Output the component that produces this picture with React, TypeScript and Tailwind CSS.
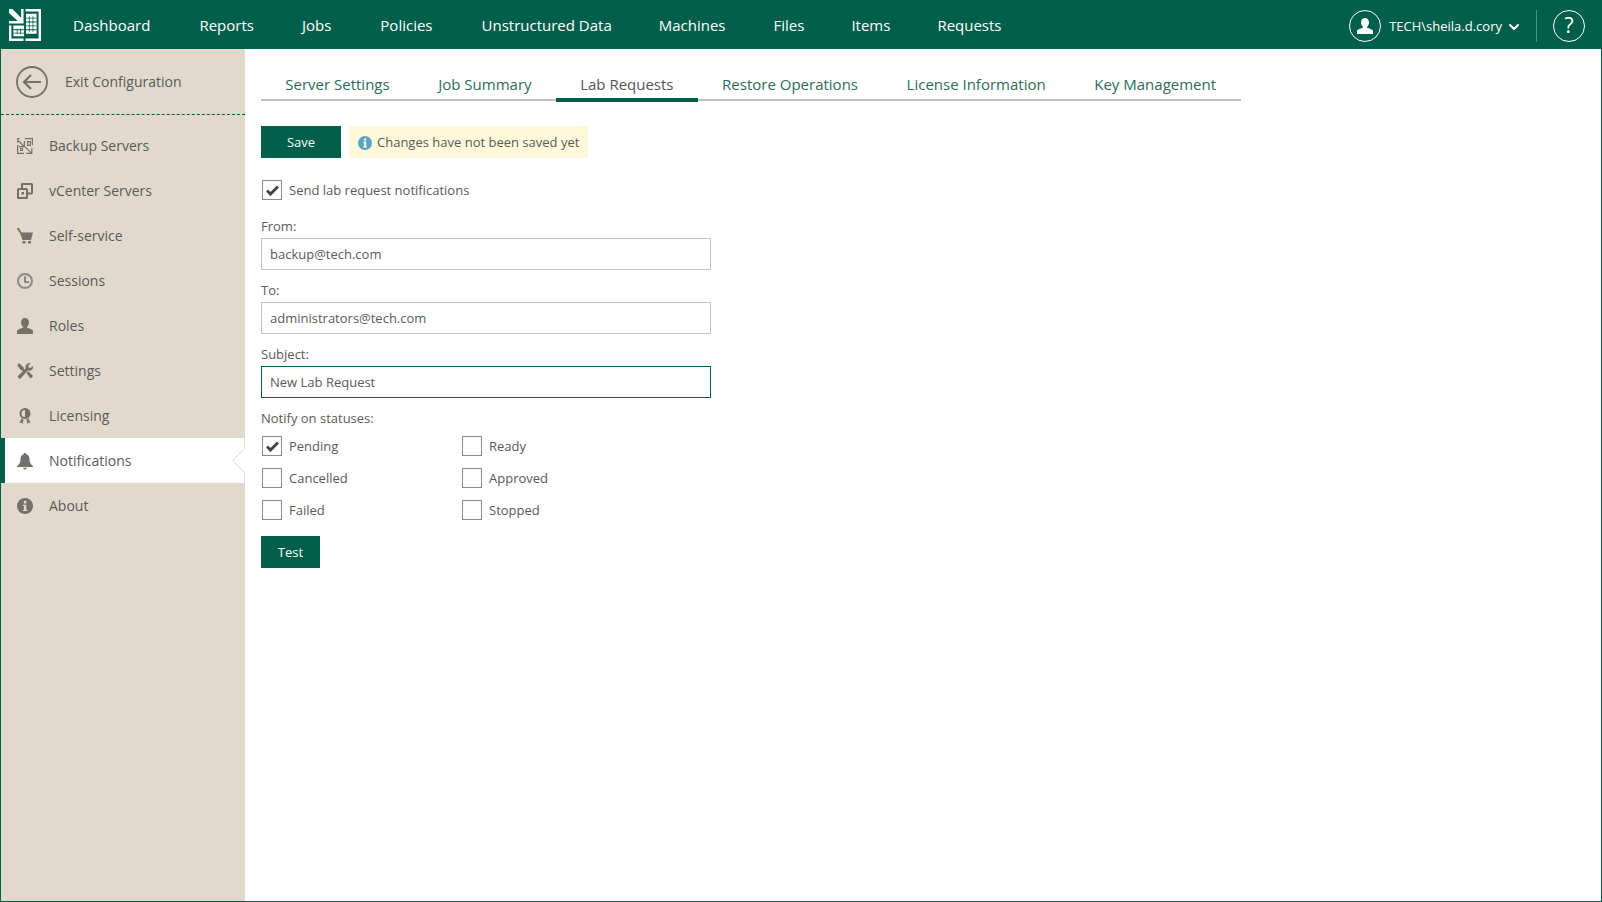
import { ChevronDown } from 'lucide-react';

const navItems = [
  { label: 'Dashboard', className: '' },
  { label: 'Reports', className: 'ml-[49px]' },
  { label: 'Jobs', className: 'ml-[48px]' },
  { label: 'Policies', className: 'ml-[49px]' },
  { label: 'Unstructured Data', className: 'ml-[49px]' },
  { label: 'Machines', className: 'ml-[47px]' },
  { label: 'Files', className: 'ml-[48px]' },
  { label: 'Items', className: 'ml-[47px]' },
  { label: 'Requests', className: 'ml-[47px]' },
];
const tabs = ['Server Settings', 'Job Summary', 'Lab Requests', 'Restore Operations', 'License Information', 'Key Management'];

function Logo() {
  return (
    <svg width="32" height="32" viewBox="0 0 33 33" fill="#fff" className="mt-px shrink-0">
      <path d="M0 0h3.500l9 9V0H15v15H0v-2.500h9L0 4z" />
      <path d="M17 0h16v33H17v-2.500h13.500v-28H17zM0 17h2.500v13.500H15V33H0z" />
      <path d="M17.500 5h11v20.500h-11zM4.500 17h11v11h-11z" />
      <g fill="#005f4b">
        <path d="M20.500 7.500h.8v16h-.8zM24.300 7.500h.8v16h-.8zM17.500 9h11v.8h-11zM17.500 13h11v.8h-11zM17.500 17h11v.8h-11zM17.500 21h11v.8h-11z" />
        <path d="M8 20h.8v6H8zM11.500 20h.8v6h-.8zM4.500 21h11v.8h-11zM4.500 24.500h11v.8h-11z" />
      </g>
    </svg>
  );
}

const icons: Record<string, React.ReactNode> = {
  'Backup Servers': (
    <path fillRule="evenodd" d="M0 0h2.500v1.200H1.200v3.300H0zM8 0h8v7h-1.200V1.200H8zM1 1.500l5.800 5.800V3h1.200v6.300H1.800V8.100h4L.200 2.400zM8.500 8.500l5.700 5.700v-4h1.200V16H9.300v-1.200h4L7.700 9.300zM0 7h1.200v7.800H7V16H0zM10 3h4v5h-4zm1.200 1.200v2.600h1.600V4.200zM3 10h3v3H3zm1 1v1h1v-1z" />
  ),
  'vCenter Servers': (
    <path fillRule="evenodd" d="M5 0h9.500A1.500 1.500 0 0 1 16 1.500V10a1.500 1.500 0 0 1-1.500 1.500H11v3A1.500 1.500 0 0 1 9.500 16h-8A1.500 1.500 0 0 1 0 14.500v-8A1.500 1.500 0 0 1 1.500 5H4V1.500A1 1 0 0 1 5 0zm1 2v3h3.500A1.500 1.500 0 0 1 11 6.500v3h3V2zM2 7v7h7V7zm2.500 2h2.500v2.500H4.500z" />
  ),
  'Self-service': (
    <path d="M0 0h2l2.500 4.500H16L14 12H5.500L3 5 0 1zM5.500 13h3v2.500h-3zM11 13h3v2.500h-3z" />
  ),
  Sessions: (
    <g>
      <circle cx="8" cy="8" r="7" fill="none" stroke="#8a8a86" strokeWidth="2" />
      <path d="M7.200 3.500h1.600v4.800H12v1.500H7.200z" fill="#75706a" />
    </g>
  ),
  Roles: (
    <path d="M8 0c2.400 0 4 1.900 4 4.400 0 1.800-.8 3.400-1.900 4.200v1.200c2.700.9 5.900 1.900 5.900 3.400V16H0v-2.800c0-1.500 3.200-2.500 5.900-3.400V8.600C4.800 7.800 4 6.200 4 4.400 4 1.900 5.600 0 8 0z" />
  ),
  Settings: (
    <path d="M2 0l4.700 4.600.3 1.600 1.700 1.700-1.400 1.400-1.700-1.700-1.600-.3L.3 2.600zM12.500 0a3.600 3.600 0 0 1 1.200.2L11.300 2.600l.4 2 2 .4L16 2.700a4 4 0 0 1-5.100 4.900L3.600 15.500c-.8.800-3.500-1.500-2.600-2.600l7.700-7.600A4 4 0 0 1 12.500 0zM9.600 9.900l1.700-1.700 4.300 4.400c.9 1-1.600 3.400-2.600 2.500z" />
  ),
  Licensing: (
    <g transform="translate(2 0)">
      <path fillRule="evenodd" d="M6 0a5.500 5.500 0 1 1 0 11A5.500 5.500 0 0 1 6 0zm0 2a3.500 3.500 0 0 0 0 7z" />
      <path d="M2.400 10.500l2.200 1.200L3.400 16l-1-1.500-1.900.4zM9.600 10.500l-2.200 1.200L8.600 16l1-1.500 1.900.4z" />
    </g>
  ),
  Notifications: (
    <path d="M8 0c.8 0 1.300.5 1.300 1.300 2.300.6 3.200 2.400 3.200 5.200 0 3 1.200 5 3.500 6.700V14H0v-.8c2.300-1.700 3.500-3.700 3.500-6.700 0-2.800.9-4.600 3.200-5.200C6.700.5 7.200 0 8 0zM6 14.800h4A2.100 2.100 0 0 1 8 16.500a2.100 2.100 0 0 1-2-1.700z" />
  ),
  About: (
    <path fillRule="evenodd" d="M8 0a8 8 0 1 1 0 16A8 8 0 0 1 8 0zM6.900 2.800v2.600h2.400V2.800zM6 6.700v1.400h1v3.600H6V13h4.300v-1.300h-1V6.700z" />
  ),
};

function SideRow({ label, active }: { label: string; active?: boolean }) {
  return (
    <div className={`relative flex h-[45px] items-center ${active ? 'bg-white border-l-[4px] border-[#005f4b] pl-[12px]' : 'pl-[16px]'}`}>
      <svg width="16" height="16" viewBox="0 0 16 16" fill="#75706a" className="shrink-0 overflow-visible">
        {icons[label]}
      </svg>
      <span className="ml-[16px] text-[14px] text-[#5a5a5a]">{label}</span>
      {active && (
        <svg width="13" height="45" viewBox="0 0 13 45" fill="none" stroke="#e0d9cc" className="absolute right-0 top-0">
          <path d="M12.500 0v10.500L.7 22.500l11.800 12V45" />
        </svg>
      )}
    </div>
  );
}

function CheckBox({ label, checked }: { label: string; checked?: boolean }) {
  return (
    <label className="flex h-[32px] items-center pl-px">
      <span className="flex h-5 w-5 items-center justify-center border border-[#8c8c8c] bg-white">
        {checked && (
          <svg width="13" height="11" viewBox="0 0 13 11" fill="none" stroke="#444" strokeWidth="3">
            <path d="M1 5.500l3.500 3.500L12 1.500" />
          </svg>
        )}
      </span>
      <span className="ml-[7px] pt-[2px] text-[13px] text-[#5a5a5a]">{label}</span>
    </label>
  );
}

function Field({ label, value, focused }: { label: string; value: string; focused?: boolean }) {
  return (
    <div className="mb-[6px]">
      <div className="h-[26px] pt-[5px] text-[13px] leading-[18px] text-[#5a5a5a]">{label}</div>
      <div className={`flex h-[32px] w-[450px] items-center border pl-[8px] pt-[2px] text-[13px] text-[#5a5a5a] ${focused ? 'border-[#005f4b]' : 'border-[#c4c4c4]'}`}>
        {value}
      </div>
    </div>
  );
}

export default function App() {
  return (
    <div className="flex h-[902px] w-[1602px] flex-col overflow-hidden bg-white font-['Open_Sans',sans-serif]">
      <header className="flex h-[49px] shrink-0 items-center bg-[#005f4b] pl-[9px] text-white">
        <Logo />
        <nav className="ml-[32px] flex pt-[2px] text-[15px]">
          {navItems.map((item) => (
            <span key={item.label} className={item.className}>{item.label}</span>
          ))}
        </nav>
        <div className="ml-auto flex items-center pt-[2px]">
          <span className="flex h-8 w-8 items-center justify-center rounded-full border-[1.500px] border-white">
            <svg width="16" height="16" viewBox="0 0 16 16" fill="#fff">
              <path d="M8 0c2.400 0 4 1.900 4 4.400 0 1.800-.8 3.400-1.900 4.200v1.200c2.700.9 5.900 1.900 5.900 3.400V16H0v-2.800c0-1.500 3.200-2.500 5.900-3.400V8.600C4.800 7.800 4 6.200 4 4.400 4 1.900 5.600 0 8 0z" />
            </svg>
          </span>
          <span className="ml-[8px] pt-[2px] text-[13px]">TECH\sheila.d.cory</span>
          <ChevronDown size={16} strokeWidth={3} className="ml-[4px] mt-[2px]" />
          <span className="ml-[14px] h-8 w-px bg-white/30" />
          <span className="ml-[16px] mr-[17px] flex h-8 w-8 items-center justify-center rounded-full border-[1.500px] border-white text-[21px]">?</span>
        </div>
      </header>

      <div className="flex min-h-0 flex-1 border-x border-b border-[#005f4b]">
        <aside className="w-[244px] shrink-0 bg-[#e0d9cc]">
          <div className="flex h-[66px] items-center border-b border-dashed border-[#005f4b] pl-[15px]">
            <svg width="32" height="32" viewBox="0 0 32 32" fill="none" stroke="#75706a" strokeWidth="1.800">
              <circle cx="16" cy="16" r="15" />
              <path d="M25 16H8M15 9l-7 7 7 7" strokeWidth="2.200" />
            </svg>
            <span className="ml-[17px] text-[14px] text-[#5a5a5a]">Exit Configuration</span>
          </div>
          <div className="pt-[8px]">
            {Object.keys(icons).map((label) => (
              <SideRow key={label} label={label} active={label === 'Notifications'} />
            ))}
          </div>
        </aside>

        <main className="min-w-0 flex-1 pl-[16px]">
          <div className="mt-[19px] flex h-[33px] w-[980px] border-b-2 border-[#c0c0c0] text-[15px]">
            {tabs.map((tab) => (
              <div
                key={tab}
                className={`h-[34px] px-[24.300px] pt-[5px] leading-[22px] ${tab === 'Lab Requests' ? 'border-b-4 border-[#005f4b] text-[#555]' : 'text-[#2f6b5c]'}`}
              >
                {tab}
              </div>
            ))}
          </div>

          <div className="mt-[25px] flex items-center">
            <button className="h-8 w-20 bg-[#005f4b] pt-[2px] text-[13px] text-white">Save</button>
            <div className="ml-2 flex h-8 items-center bg-[#fef9db] pl-[9px] pr-[9px] text-[13px] text-[#5a5a5a]">
              <svg width="14" height="14" viewBox="0 0 16 16" fill="#5ba4c8" className="mr-[5px] mt-[2px]">
                <path fillRule="evenodd" d="M8 0a8 8 0 1 1 0 16A8 8 0 0 1 8 0zM6.900 2.800v2.600h2.400V2.800zM6 6.700v1.400h1v3.600H6V13h4.300v-1.300h-1V6.700z" />
              </svg>
              <span className="pt-[2px]">Changes have not been saved yet</span>
            </div>
          </div>

          <div className="mt-[16px]">
            <CheckBox label="Send lab request notifications" checked />
          </div>

          <div className="mt-[6px]">
            <Field label="From:" value="backup@tech.com" />
            <Field label="To:" value="administrators@tech.com" />
            <Field label="Subject:" value="New Lab Request" focused />
          </div>

          <div className="h-[26px] pt-[5px] text-[13px] leading-[18px] text-[#5a5a5a]">Notify on statuses:</div>
          <div className="grid w-[400px] grid-cols-[200px_200px]">
            <CheckBox label="Pending" checked />
            <CheckBox label="Ready" />
            <CheckBox label="Cancelled" />
            <CheckBox label="Approved" />
            <CheckBox label="Failed" />
            <CheckBox label="Stopped" />
          </div>
          <button className="mt-[10px] h-8 w-[59px] bg-[#005f4b] pt-[2px] text-[13px] text-white">Test</button>
        </main>
      </div>
    </div>
  );
}
